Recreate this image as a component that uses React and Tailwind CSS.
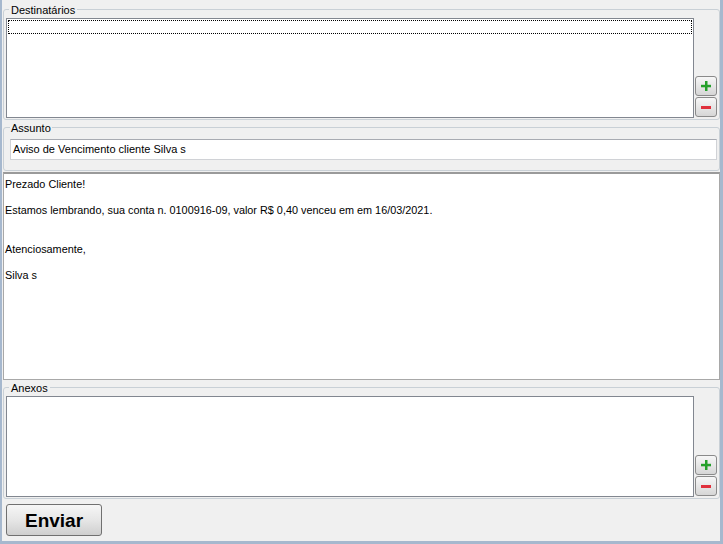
import React from 'react';

const MAIL_LINES = [
  'Prezado Cliente!',
  '',
  'Estamos lembrando, sua conta n. 0100916-09, valor R$ 0,40 venceu em em 16/03/2021.',
  '',
  '',
  'Atenciosamente,',
  '',
  'Silva s',
];

function SideButtons() {
  return (
    <div className="w-[22px] flex flex-col justify-end gap-[1px] pb-[1px]">
      <button className="h-[20px] flex items-center justify-center rounded-[3px] border border-[#8a8a8a] bg-linear-to-b from-[#f7f7f7] to-[#d6d6d6]">
        <svg width="10" height="10" viewBox="0 0 10 10">
          <rect x="4" y="0" width="2.5" height="10" fill="#25a02a" />
          <rect x="0" y="3.8" width="10" height="2.5" fill="#25a02a" />
        </svg>
      </button>
      <button className="h-[20px] flex items-center justify-center rounded-[3px] border border-[#8a8a8a] bg-linear-to-b from-[#f7f7f7] to-[#d6d6d6]">
        <svg width="10" height="10" viewBox="0 0 10 10">
          <rect x="0" y="4" width="10" height="3" fill="#e0303c" />
        </svg>
      </button>
    </div>
  );
}

function ListGroup({ label, focused, tall }) {
  return (
    <fieldset className="ml-[1px] border border-[#c9d0d6] rounded-[3px] px-[2px] pb-[1px]">
      <legend className="ml-[3px] px-[2px] pt-[1px] leading-[12px]">{label}</legend>
      <div className={`flex gap-[1px] pt-[2px] ${tall ? 'h-[103px]' : 'h-[102px]'}`}>
        <div className="flex-1 bg-white border border-[#828790] p-[1px]">
          {focused && <div className="h-[14px] border border-dotted border-black" />}
        </div>
        <SideButtons />
      </div>
    </fieldset>
  );
}

export default function App() {
  return (
    <div className="w-[723px] h-[544px] bg-[#f0f0f0] border-l-2 border-r-[3px] border-b-[3px] border-[#a6b8ce] flex flex-col font-['Liberation_Sans',Arial,sans-serif] text-[11px] text-black">
      <div className="h-[3px]" />
      <ListGroup label="Destinatários" focused />

      <fieldset className="ml-[1px] mt-[1px] border border-[#c9d0d6] rounded-[3px] pl-[6px] pr-[2px] pb-[10px]">
        <legend className="px-[1px] pt-[1px] leading-[12px]">Assunto</legend>
        <div className="pt-[5px]">
          <div className="h-[21px] bg-white border border-[#d0d2d6] border-t-[#a8abb2] pl-[2px] flex items-center">
            Aviso de Vencimento cliente Silva s
          </div>
        </div>
      </fieldset>

      <div className="ml-[1px] mt-[1px] flex-1 bg-white border border-[#a8a8a8] border-t-2 border-t-[#9a9a9a] pl-[1px] pt-[4px] leading-[13px] text-[10.85px]">
        {MAIL_LINES.map((line, i) => (
          <div key={i} className="h-[13px] whitespace-pre">{line}</div>
        ))}
      </div>

      <div className="mt-[1px]">
        <ListGroup label="Anexos" tall />
      </div>

      <div className="h-[42px] pt-[5px] pl-[4px]">
        <button className="w-[96px] h-[32px] rounded-[3px] border border-[#707070] bg-linear-to-b from-[#f6f6f6] via-[#e6e6e6] to-[#cfcfcf] text-[19px] font-bold leading-none">
          Enviar
        </button>
      </div>
    </div>
  );
}
